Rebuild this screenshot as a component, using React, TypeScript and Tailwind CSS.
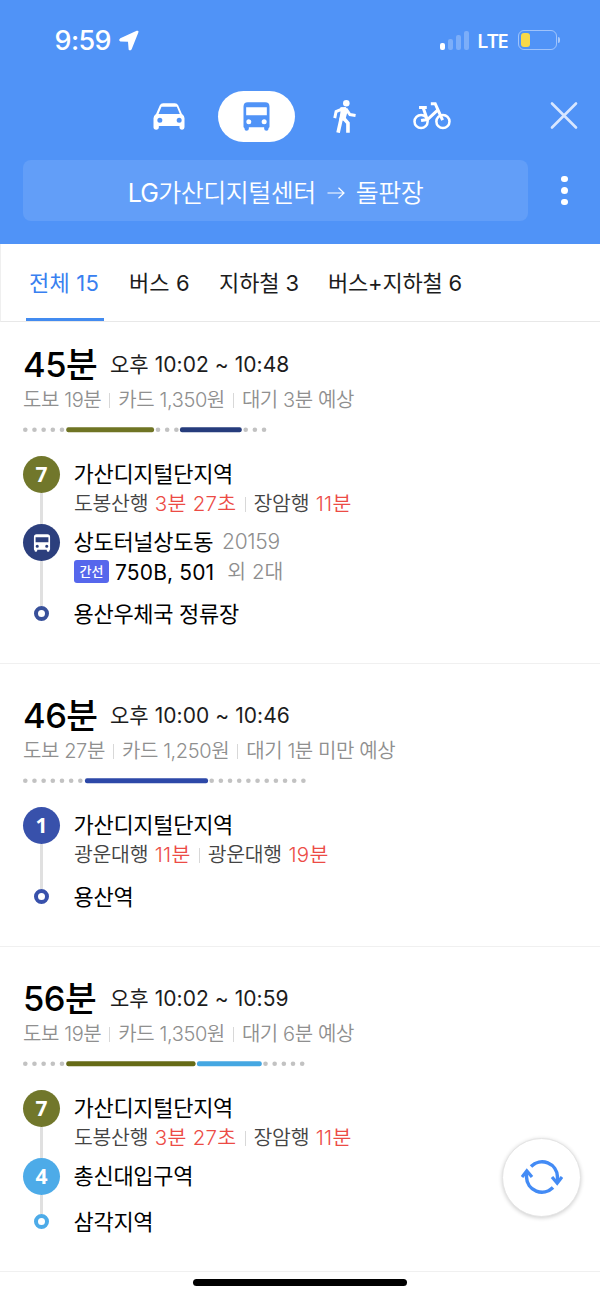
import React from 'react';
import clsx from 'clsx';

interface Segment {
  from: number;
  to?: number;
  dots?: number;
  color?: string;
}

interface Step {
  badge: string;
  color: string;
  height: string;
  name: string;
  code?: string;
  arrivals?: { line: string; time: string }[];
  bus?: { type: string; numbers: string; more: string };
}

interface Route {
  minutes: string;
  time: string;
  info: string[];
  segments: Segment[];
  steps: Step[];
  end: { name: string; color: string };
}

const tabs = [
  { label: '전체 15', width: 'w-[78px]', spacing: 'pl-[3px] tracking-[0.2px]', active: true },
  { label: '버스 6', width: 'w-[66px]', spacing: 'pl-px tracking-[0.1px]' },
  { label: '지하철 3', width: 'w-[85px]', spacing: 'pl-px tracking-[-0.1px]' },
  { label: '버스+지하철 6', width: 'w-[140px]', spacing: 'pl-px tracking-[-0.2px]' }
];

const routes: Route[] = [
  {
    minutes: '45분',
    time: '오후 10:02 ~ 10:48',
    info: ['도보 19분', '카드 1,350원', '대기 3분 예상'],
    segments: [
      { from: 2.3, dots: 5 },
      { from: 43.3, to: 131, color: '#6f7424' },
      { from: 135, dots: 3 },
      { from: 157, to: 218.7, color: '#263c7c' },
      { from: 222.7, dots: 3 }
    ],
    steps: [
      {
        badge: '7',
        color: 'bg-[#71772b]',
        height: 'h-[68px]',
        name: '가산디지털단지역',
        arrivals: [
          { line: '도봉산행', time: '3분 27초' },
          { line: '장암행', time: '11분' }
        ]
      },
      {
        badge: 'bus',
        color: 'bg-[#2c3f7d]',
        height: 'h-[71px]',
        name: '상도터널상도동',
        code: '20159',
        bus: { type: '간선', numbers: '750B, 501', more: '외 2대' }
      }
    ],
    end: { name: '용산우체국 정류장', color: 'border-[#38509a]' }
  },
  {
    minutes: '46분',
    time: '오후 10:00 ~ 10:46',
    info: ['도보 27분', '카드 1,250원', '대기 1분 미만 예상'],
    segments: [
      { from: 2.3, dots: 7 },
      { from: 62, to: 185, color: '#2d48a8' },
      { from: 188.7, dots: 11 }
    ],
    steps: [
      {
        badge: '1',
        color: 'bg-[#3851ab]',
        height: 'h-[71px]',
        name: '가산디지털단지역',
        arrivals: [
          { line: '광운대행', time: '11분' },
          { line: '광운대행', time: '19분' }
        ]
      }
    ],
    end: { name: '용산역', color: 'border-[#3851ab]' }
  },
  {
    minutes: '56분',
    time: '오후 10:02 ~ 10:59',
    info: ['도보 19분', '카드 1,350원', '대기 6분 예상'],
    segments: [
      { from: 2.3, dots: 5 },
      { from: 43.3, to: 172.5, color: '#666b17' },
      { from: 174, to: 238.7, color: '#45a7e2' },
      { from: 242.5, dots: 5 }
    ],
    steps: [
      {
        badge: '7',
        color: 'bg-[#71772b]',
        height: 'h-[68px]',
        name: '가산디지털단지역',
        arrivals: [
          { line: '도봉산행', time: '3분 27초' },
          { line: '장암행', time: '11분' }
        ]
      },
      { badge: '4', color: 'bg-[#4dabe8]', height: 'h-[45px]', name: '총신대입구역' }
    ],
    end: { name: '삼각지역', color: 'border-[#4dabe8]' }
  }
];

const CarIcon = () => (
  <svg viewBox="0 0 95 81" className="h-[27px] w-8" fill="currentColor" fillRule="evenodd">
    <path d="M20 7Q23 1 30 1H65Q72 1 75 7L86 32Q94 38 94 46V73Q94 80 87 80Q79 80 79 73V69H17V73Q17 80 9 80Q1 80 1 73V46Q1 38 9 32ZM25 11L16 33H80L71 11ZM20 44A7.500 7.500 0 1 0 20 59A7.500 7.500 0 1 0 20 44ZM78 44A7.500 7.500 0 1 0 78 59A7.500 7.500 0 1 0 78 44Z" />
  </svg>
);

const BusIcon = ({ className }: { className: string }) => (
  <svg viewBox="0 0 80 87" className={className} fill="currentColor" fillRule="evenodd">
    <path d="M14 1H66Q79 1 79 14V74Q79 77 76 78V80Q76 86 70 86Q63 86 63 80V76H17V80Q17 86 10 86Q4 86 4 80V78Q1 77 1 74V14Q1 1 14 1ZM9 16V40H71V16ZM17 52A7.500 7.500 0 1 0 17 67A7.500 7.500 0 1 0 17 52ZM63 52A7.500 7.500 0 1 0 63 67A7.500 7.500 0 1 0 63 52Z" />
  </svg>
);

const WalkIcon = () => (
  <svg viewBox="0 0 69 100" className="h-[33px] w-[23px]" fill="none" stroke="currentColor" strokeWidth="9">
    <circle cx="40" cy="10" r="10" fill="currentColor" stroke="none" />
    <path d="M22 22L38 21L45 30L38 56L35 62L18 62L22 38Z" fill="currentColor" stroke="none" />
    <path d="M30 26L9 35L5 55M39 27L51 44L68 47" />
    <path d="M25 54L15 99M30 53L45 70V99" strokeWidth="11" />
  </svg>
);

const BikeIcon = () => (
  <svg viewBox="0 0 113 83" className="h-7 w-[38px]" fill="none" stroke="currentColor" strokeWidth="7.500">
    <circle cx="24" cy="58" r="19.500" />
    <circle cx="89" cy="58" r="19.500" />
    <path d="M18 16H41M30 16L42 51M24 55L43 52L74 23M53 5H66L88 54" strokeWidth="9" />
  </svg>
);

const StatusBar = () => (
  <div className="flex h-20 items-center pl-[54.5px] pr-[40px]">
    <span className="text-[27px] font-medium tracking-[-0.6px]">9:59</span>
    <svg viewBox="0 0 60 62" className="ml-[7.5px] h-[21px] w-5" fill="currentColor">
      <path d="M53 2Q60 0 58 7L38 57Q34 63 29 59L27 35L4 34Q-3 30 4 24Z" />
    </svg>
    <div className="ml-auto flex h-[19px] items-end gap-[3px]">
      <i className="h-[7px] w-[5px] rounded-[2px] bg-white" />
      <i className="h-[11px] w-[5px] rounded-[2px] bg-white/25" />
      <i className="h-[15px] w-[5px] rounded-[2px] bg-white/25" />
      <i className="h-[19px] w-[5px] rounded-[2px] bg-white/25" />
    </div>
    <span className="ml-[8px] w-[34px] whitespace-nowrap font-['Open_Sans'] text-[20.5px] font-semibold tracking-[-1.2px]">LTE</span>
    <div className="ml-[7px] h-5 w-[39px] rounded-[6px] border-[1.5px] border-white/45 p-[2px]">
      <div className="h-full w-[9px] rounded-[3px] bg-[#f9d949]" />
    </div>
    <i className="ml-px h-[6px] w-[2px] rounded-r-full bg-white/50" />
  </div>
);

const Header = () => (
  <header className="h-[244px] bg-[#5093f7] text-white">
    <StatusBar />
    <div className="flex h-[72px] items-center pl-[153px] pr-[21px]">
      <CarIcon />
      <div className="ml-[33px] flex h-[51px] w-[77px] items-center justify-center rounded-full bg-white text-[#5093f7]">
        <BusIcon className="h-[29px] w-[27px]" />
      </div>
      <span className="ml-[38px]"><WalkIcon /></span>
      <span className="ml-[57px]"><BikeIcon /></span>
      <svg viewBox="0 0 30 30" className="ml-auto h-[30px] w-[30px]" stroke="#d8e7ff" strokeWidth="2.6" strokeLinecap="round">
        <path d="M3 2.500L27 26.500M27 2.500L3 26.500" />
      </svg>
    </div>
    <div className="flex items-center pl-[23px] pt-2">
      <div className="flex h-[61px] w-[505px] items-center justify-center rounded-lg bg-white/10 pt-[5px] text-[25px] font-[350] tracking-[-0.5px]">
        <span><span className="font-normal tracking-[-0.8px]">LG</span>가산디지털센터</span>
        <svg viewBox="0 0 18 12" className="mx-[11px] h-3 w-[18px]" fill="none" stroke="currentColor" strokeWidth="1.2">
          <path d="M0.500 6H17M11.500 0.800L17 6L11.500 11.200" />
        </svg>
        <span>돌판장</span>
      </div>
      <div className="ml-[33px] flex flex-col gap-[5px]">
        <i className="size-[6.5px] rounded-full bg-white" />
        <i className="size-[6.5px] rounded-full bg-white" />
        <i className="size-[6.5px] rounded-full bg-white" />
      </div>
    </div>
  </header>
);

const Divider = () => <i className="mx-2 h-[15px] w-px bg-[#d8d8d8]" />;

const RouteBar = ({ segments }: { segments: Segment[] }) => (
  <svg className="block h-[6px] w-[300px]" viewBox="0 0 300 6">
    {segments.map((s) =>
      s.dots ? (
        Array.from({ length: s.dots }, (_, i) => (
          <circle key={`${s.from}-${i}`} cx={s.from + i * 9.17} cy="2.700" r="2.3" fill="#c2c2c2" />
        ))
      ) : (
        <rect key={s.from} x={s.from} y="0.200" width={s.to! - s.from} height="5" rx="2" fill={s.color} />
      )
    )}
  </svg>
);

const StepRow = ({ step }: { step: Step }) => (
  <div className={clsx('flex', step.height)}>
    <div className="flex w-[37px] flex-col items-center">
      <div className={clsx('flex size-[37px] shrink-0 items-center justify-center rounded-full text-white', step.color)}>
        {step.badge === 'bus' ? (
          <BusIcon className="h-[18px] w-[18px]" />
        ) : (
          <span className="font-['Noto_Sans'] text-[21px] font-bold">{step.badge}</span>
        )}
      </div>
      <i className="w-[3px] flex-1 bg-[#e0e0e0]" />
    </div>
    <div className="ml-[14px] whitespace-nowrap">
      <div className="-ml-[0.5px] flex h-[36px] items-center pb-px text-[22px] tracking-[-0.3px]">
        {step.name}
        {step.code && <span className="ml-[9px] text-[21px] font-[350] text-[#8e8e8e]">{step.code}</span>}
      </div>
      {step.arrivals && (
        <div className="-mt-[3px] flex h-[30px] items-center text-[20.5px] font-[350] text-[#444]">
          {step.arrivals.map((a, i) => (
            <React.Fragment key={i}>
              {i > 0 && <Divider />}
              <span className="tracking-[-0.3px]">{a.line}</span>
              <span className="ml-[6.5px] tracking-[0.3px] text-[#ec4b45]">{a.time}</span>
            </React.Fragment>
          ))}
        </div>
      )}
      {step.bus && (
        <div className="-mt-[3px] flex h-[30px] items-center">
          <span className="mb-px flex h-[23px] w-[35px] items-center justify-center rounded-[3px] bg-[#5667ec] text-[13px] font-medium text-white">
            {step.bus.type}
          </span>
          <span className="ml-[6px] text-[21px] tracking-[0.15px]">{step.bus.numbers}</span>
          <span className="ml-[13px] text-[20.5px] font-[350] text-[#8e8e8e]">{step.bus.more}</span>
        </div>
      )}
    </div>
  </div>
);

const RouteItem = ({ route, first }: { route: Route; first: boolean }) => (
  <section className={clsx('border-b border-[#f0f0f0] pb-[31px] pl-[23px]', first ? 'pt-[21px]' : 'pt-[30px]')}>
    <div className="flex h-11 items-center whitespace-nowrap pb-px">
      <h2 className="w-[87px] pt-[2px] text-[34.5px] font-medium tracking-[-0.5px] text-black">{route.minutes}</h2>
      <span className="text-[21px] tracking-[0.05px] text-[#1c1c1c]">{route.time}</span>
    </div>
    <div className="flex h-6 items-center whitespace-nowrap pt-[2px] text-[20px] font-[350] tracking-[-0.4px] text-[#8f8f8f]">
      {route.info.map((item, i) => (
        <React.Fragment key={item}>
          {i > 0 && <Divider />}
          <span>{item}</span>
        </React.Fragment>
      ))}
    </div>
    <div className="pb-[23px] pt-4">
      <RouteBar segments={route.segments} />
    </div>
    {route.steps.map((step) => (
      <StepRow key={step.badge} step={step} />
    ))}
    <div className="flex h-[37px] whitespace-nowrap">
      <div className="flex w-[37px] flex-col items-center">
        <i className="h-[11px] w-[3px] bg-[#e0e0e0]" />
        <i className={clsx('size-[15px] rounded-full border-[4.5px]', route.end.color)} />
      </div>
      <span className="ml-[13.5px] flex items-center text-[22px] tracking-[-0.3px]">{route.end.name}</span>
    </div>
  </section>
);

const RefreshButton = () => (
  <button className="absolute left-[502px] top-[1138px] flex size-[79px] items-center justify-center rounded-full border border-[#e4e4e4] bg-white shadow-[0_1px_4px_rgba(0,0,0,0.2)]">
    <svg viewBox="0 0 42 38" className="h-[38px] w-[42px]" fill="none" stroke="#438bf5" strokeWidth="3.5">
      <path d="M10 7.400A15.500 15.500 0 0 1 36.500 18V23M32 28.600A15.500 15.500 0 0 1 5.500 18V13" />
      <path d="M31 18L36.200 24.300L41 18M1 18L5.800 11.700L11 18" strokeWidth="3.2" />
    </svg>
  </button>
);

const App: React.FC = () => (
  <div className="relative h-[1298px] w-[600px] overflow-hidden bg-white font-['Inter','Noto_Sans_CJK_KR',sans-serif] leading-none text-black">
    <Header />
    <nav className="flex h-[78px] gap-6 whitespace-nowrap border-b border-l border-b-[#e8e8e8] border-l-[#efefef] pl-[25px]">
      {tabs.map((tab) => (
        <div
          key={tab.label}
          className={clsx(
            'flex items-center border-b-[3px] pt-[4px] text-[22px]',
            tab.width,
            tab.spacing,
            tab.active ? 'border-[#438bf0] text-[#3880f0]' : 'border-transparent text-[#1c1c1c]'
          )}
        >
          {tab.label}
        </div>
      ))}
    </nav>
    {routes.map((route, i) => (
      <RouteItem key={route.minutes} route={route} first={i === 0} />
    ))}
    <div className="flex justify-center pt-[7px]">
      <i className="h-[7px] w-[214px] rounded-full bg-black" />
    </div>
    <RefreshButton />
  </div>
);

export default App;
